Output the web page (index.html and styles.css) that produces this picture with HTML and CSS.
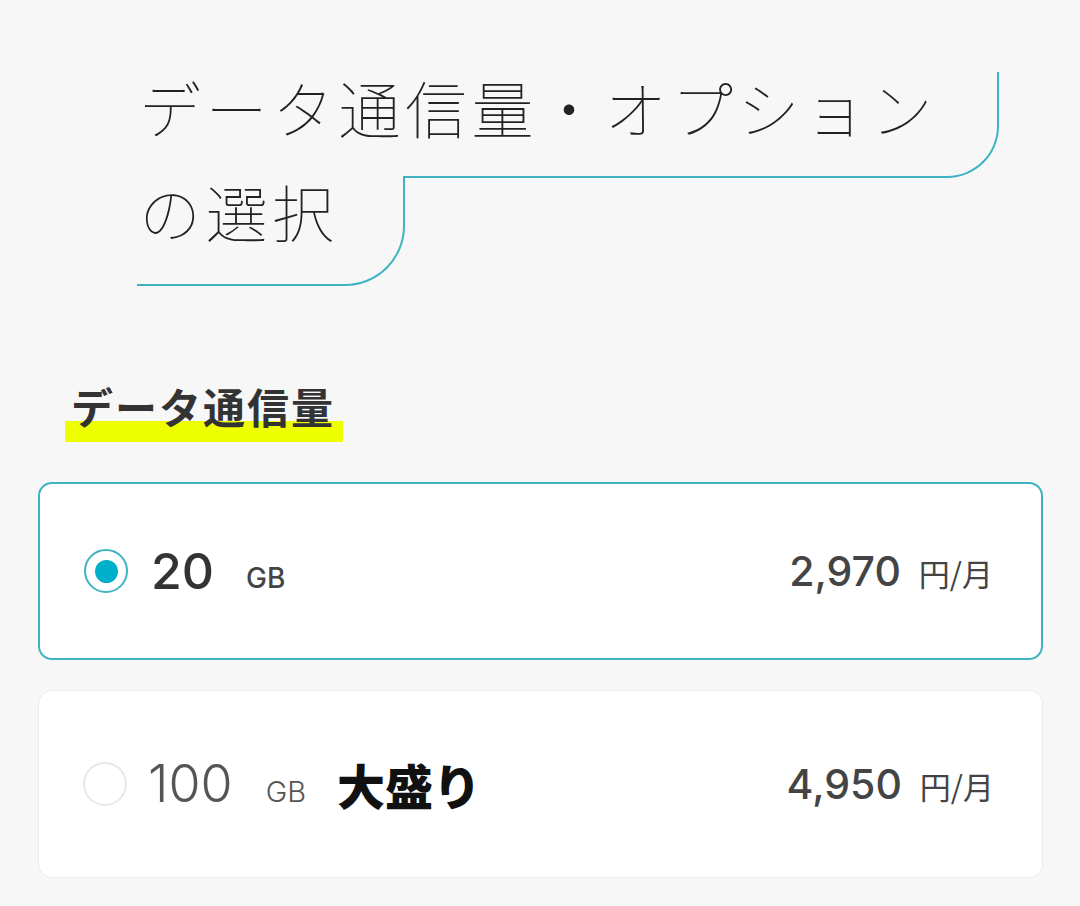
FILE: index.html
```html
<!DOCTYPE html>
<html lang="ja">
<head>
<meta charset="utf-8">
<link rel="stylesheet" href="styles.css">
</head>
<body>
<main class="page">
  <h1 class="title">
    <span class="title-line title-line1">データ通信量・オプション</span>
    <span class="title-line title-line2">の選択</span>
  </h1>
  <h2 class="section-head"><span class="marker">データ通信量</span></h2>
  <div class="plans">
    <label class="plan plan-selected">
      <span class="radio radio-on"></span>
      <span class="amount amount-bold">20</span>
      <span class="unit unit-bold">GB</span>
      <span class="price"><span class="price-num">2,970</span><span class="price-unit">円/月</span></span>
    </label>
    <label class="plan plan-large">
      <span class="radio"></span>
      <span class="amount amount-light">100</span>
      <span class="unit unit-light">GB</span>
      <span class="tag">大盛り</span>
      <span class="price"><span class="price-num">4,950</span><span class="price-unit">円/月</span></span>
    </label>
  </div>
</main>
</body>
</html>
```
FILE: styles.css
```css
html, body {
  margin: 0;
  padding: 0;
  background: #f7f7f7;
}
body {
  font-family: "Noto Sans CJK JP", "Noto Sans", sans-serif;
  color: #333;
}
.page {
  width: 1080px;
  height: 906px;
  overflow: hidden;
  padding-top: 72px;
  box-sizing: border-box;
}
.title {
  margin: 0 0 0 137px;
  font-weight: 100;
  font-size: 62px;
  color: #222;
  display: flex;
  flex-direction: column;
  align-items: flex-start;
}
.title-line {
  display: block;
  line-height: 70px;
  padding-bottom: 34px;
  padding-left: 2px;
  border-right: 2px solid #3fb3c3;
  border-bottom: 2px solid #3fb3c3;
  border-bottom-right-radius: 52px;
  background: #f7f7f7;
  letter-spacing: 4.5px;
}
.title-line1 {
  width: 862px;
  box-sizing: border-box;
}
.title-line2 {
  width: 268px;
  box-sizing: border-box;
  margin-top: -2px;
  padding-bottom: 38px;
  border-bottom-right-radius: 60px;
}
.section-head {
  margin: 94px 0 0 65px;
  font-size: 42px;
  font-weight: 700;
  line-height: 52px;
  color: #333;
}
.marker {
  display: inline-block;
  padding: 0 8px 12px 6px;
  background: linear-gradient(to bottom, transparent 0, transparent 41px, #eeff00 41px, #eeff00 62px, transparent 62px);
  letter-spacing: 2px;
}
.plans {
  margin: 38px 37px 0 38px;
  display: flex;
  flex-direction: column;
  gap: 30px;
}
.plan {
  display: flex;
  align-items: center;
  background: #fff;
  border: 1px solid #ececec;
  border-radius: 14px;
  height: 188px;
  box-sizing: border-box;
  padding: 0 48px 0 44px;
}
.plan-selected {
  border: 2px solid #3fb3c3;
  height: 178px;
}
.radio {
  width: 44px;
  height: 44px;
  border-radius: 50%;
  border: 2px solid #e8e8e8;
  box-sizing: border-box;
  flex: none;
  display: flex;
  align-items: center;
  justify-content: center;
}
.radio-on {
  border-color: #3fb3c3;
}
.radio-on::after {
  content: "";
  width: 23px;
  height: 23px;
  border-radius: 50%;
  background: #00afca;
}
.amount {
  font-family: "Inter", "Liberation Sans", sans-serif;
  font-size: 50px;
  margin-left: 22px;
  line-height: 1;
}
.amount-bold {
  font-weight: 500;
  color: #333;
  margin-left: 23px;
}
.amount-light {
  font-weight: 300;
  color: #555;
  margin-left: 21px;
  font-size: 52px;
}
.unit {
  font-family: "Inter", "Liberation Sans", sans-serif;
  font-size: 28px;
  line-height: 1;
  margin-left: 32px;
  align-self: center;
  padding-top: 14px;
}
.unit-bold {
  font-weight: 500;
  color: #444;
}
.unit-light {
  font-weight: 300;
  color: #555;
  margin-left: 33px;
  font-size: 29px;
}
.tag {
  font-size: 48px;
  font-weight: 900;
  color: #111;
  margin-left: 31px;
  line-height: 1;
}
.price {
  margin-left: auto;
  display: flex;
  align-items: baseline;
  color: #444;
}
.price-num {
  font-family: "Inter", "Liberation Sans", sans-serif;
  font-size: 41px;
  font-weight: 500;
}
.price-unit {
  font-size: 31px;
  margin-left: 18px;
}
```
